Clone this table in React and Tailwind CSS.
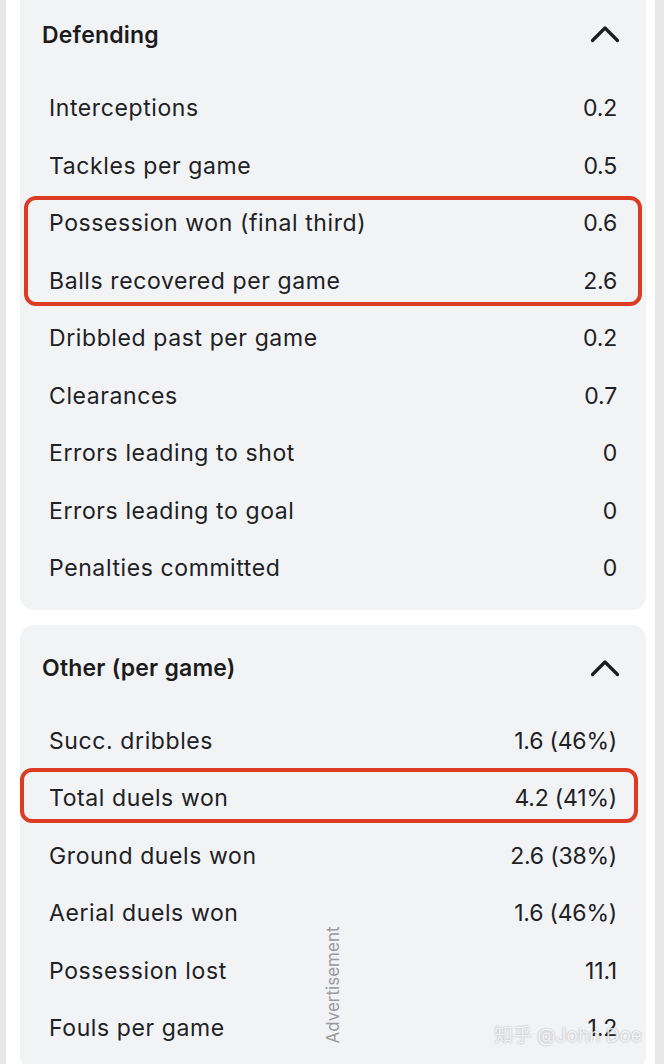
import React from "react";

const Chevron = () => (
  <svg width="30" height="18" viewBox="0 0 30 18" fill="none" className="block">
    <path d="M2.5 15.5 L15 3 L27.5 15.5" stroke="#1c1c1c" strokeWidth="3.2" strokeLinecap="round" strokeLinejoin="round" />
  </svg>
);

const Row = ({ label, value }) => (
  <div className="flex h-[57.5px] items-center justify-between px-[29px] pt-[4px] text-[23px] leading-none tracking-[0.6px] text-[#202124]">
    <span>{label}</span>
    <span className="tracking-[-0.2px]">{value}</span>
  </div>
);

const defending = [
  ["Interceptions", "0.2"],
  ["Tackles per game", "0.5"],
];
const defending2 = [
  ["Possession won (final third)", "0.6"],
  ["Balls recovered per game", "2.6"],
];
const defending3 = [
  ["Dribbled past per game", "0.2"],
  ["Clearances", "0.7"],
  ["Errors leading to shot", "0"],
  ["Errors leading to goal", "0"],
  ["Penalties committed", "0"],
];
const other1 = [["Succ. dribbles", "1.6 (46%)"]];
const other3 = [
  ["Ground duels won", "2.6 (38%)"],
  ["Aerial duels won", "1.6 (46%)"],
  ["Possession lost", "11.1"],
  ["Fouls per game", "1.2"],
];

export default function App() {
  return (
    <div
      className="relative h-[1064px] w-[664px] overflow-hidden bg-white"
      style={{ fontFamily: "Inter, 'Noto Sans', 'Noto Sans CJK SC', sans-serif" }}
    >
      <div className="flex h-full">
        <div className="w-[6px] shrink-0 bg-[#e7e7e9]" />
        <div className="flex flex-1 flex-col">
          <div className="h-[5px] bg-[#f0f0f2]" />
          <div className="flex flex-col gap-[15px] pl-[14px] pr-[9px]">
            {/* Defending card */}
            <div className="rounded-b-[14px] bg-[#f2f3f5] pb-[14px]">
              <div className="flex h-[78px] items-start justify-between pl-[22px] pr-[26px] pt-[24px]">
                <span className="text-[23px] font-semibold leading-[22px] tracking-[0.2px] text-[#1c1c1c]">Defending</span>
                <span className="pt-[1px]"><Chevron /></span>
              </div>
              {defending.map(([l, v]) => (
                <Row key={l} label={l} value={v} />
              ))}
              <div className="relative">
                {defending2.map(([l, v]) => (
                  <Row key={l} label={l} value={v} />
                ))}
                <div className="pointer-events-none absolute bottom-[2px] left-[4px] right-[4px] top-[3px] rounded-[12px] border-[4px] border-[#dc3b24]" />
              </div>
              {defending3.map(([l, v]) => (
                <Row key={l} label={l} value={v} />
              ))}
            </div>
            {/* Other card */}
            <div className="rounded-[14px] bg-[#f2f3f5] pb-[14px]">
              <div className="flex h-[86px] items-center justify-between pl-[22px] pr-[26px]">
                <span className="text-[23px] font-semibold leading-[22px] tracking-[0.2px] text-[#1c1c1c]">Other (per game)</span>
                <Chevron />
              </div>
              {other1.map(([l, v]) => (
                <Row key={l} label={l} value={v} />
              ))}
              <div className="relative">
                <Row label="Total duels won" value="4.2 (41%)" />
                <div className="pointer-events-none absolute bottom-[3px] left-0 right-[8px] top-0 rounded-[12px] border-[4px] border-[#dc3b24]" />
              </div>
              {other3.map(([l, v]) => (
                <Row key={l} label={l} value={v} />
              ))}
            </div>
          </div>
        </div>
        <div className="w-[9px] shrink-0 bg-[#e7e7e9]" />
      </div>

      {/* Advertisement vertical label */}
      <div className="absolute left-[333px] top-[985px] -translate-x-1/2 -translate-y-1/2 -rotate-90 whitespace-nowrap text-[17px] leading-none text-[#9a9a9c]">
        Advertisement
      </div>

      {/* Watermark */}
      <div
        className="absolute left-[494px] top-[1026px] whitespace-nowrap text-[19px] leading-none text-white/80"
        style={{ textShadow: "0 0 2px rgba(0,0,0,0.35)" }}
      >
        知乎 @John Doe
      </div>
    </div>
  );
}
